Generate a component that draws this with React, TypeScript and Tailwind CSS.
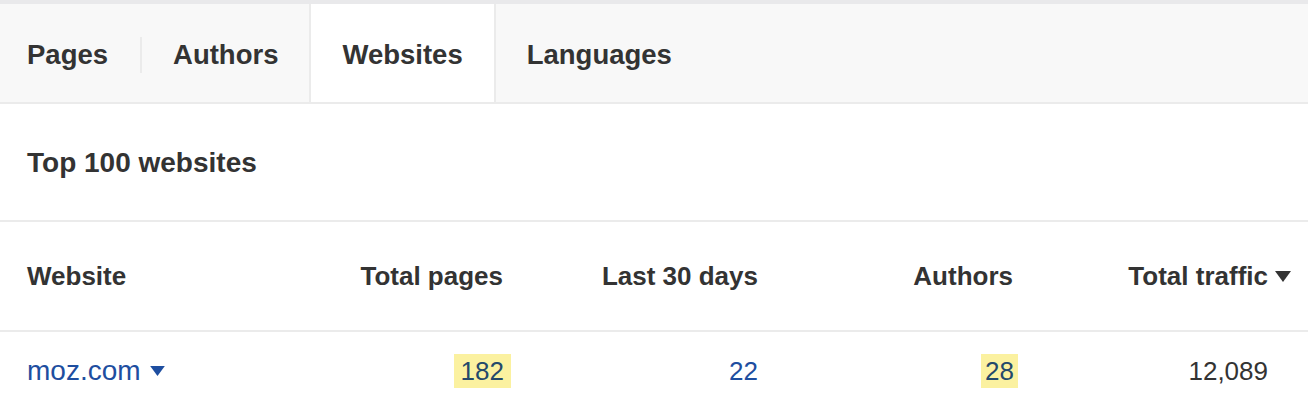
import React from 'react';

const tabs = ['Pages', 'Authors', 'Websites', 'Languages'];

const Caret: React.FC<{ className?: string }> = ({ className }) => (
  <svg viewBox="0 0 16 12" className={className} fill="currentColor">
    <path d="M0 0H16L8 11Z" />
  </svg>
);

const App: React.FC = () => {
  const active = 'Websites';

  return (
    <div className="w-[1308px] h-[404px] overflow-hidden bg-white border-t-4 border-[#e9e9eb] text-[#333] font-['Liberation_Sans',Arial,sans-serif]">
      {/* tabs */}
      <div className="flex h-[100px] bg-[#f8f8f8] border-b-2 border-[#ebebeb]">
        {tabs.map((tab, i) => {
          const isActive = tab === active;
          return (
            <div key={tab} className="flex items-stretch">
              <div
                className={`flex items-center pt-[4px] text-[27.5px] font-bold ${
                  i === 0 ? 'pl-[27px] pr-[32px]' : 'px-[31px]'
                } ${isActive ? 'bg-white border-x-2 border-[#ebebeb]' : ''}`}
              >
                {tab}
              </div>
              {i === 0 && <div className="w-[2px] self-center mt-[4px] h-[36px] bg-[#ebebeb]" />}
            </div>
          );
        })}
      </div>

      {/* title */}
      <div className="h-[118px] flex items-center pl-[27px] pt-[2px] border-b-2 border-[#ebebeb]">
        <h2 className="text-[28px] font-bold">Top 100 websites</h2>
      </div>

      {/* table header */}
      <div className="grid grid-cols-[221px_255px_255px_255px_255px] pl-[27px] h-[110px] pt-[1px] items-center border-b-2 border-[#ebebeb] text-[26px] font-bold">
        <div>Website</div>
        <div className="text-right">Total pages</div>
        <div className="text-right">Last 30 days</div>
        <div className="text-right">Authors</div>
        <div className="flex justify-end">
          <span className="relative">
            Total traffic
            <Caret className="absolute left-full top-1/2 -translate-y-1/2 ml-[7px] w-[16px] h-[12px]" />
          </span>
        </div>
      </div>

      {/* data row */}
      <div className="grid grid-cols-[221px_255px_255px_255px_255px] pl-[27px] h-[78px] items-center text-[26px]">
        <div className="flex items-center text-[#1e4ea0]">
          <span className="text-[28px]">moz.com</span>
          <Caret className="ml-[9px] w-[15px] h-[11px]" />
        </div>
        <div className="flex justify-end">
          <span className="bg-[#fbf1a0] text-[#24496b] px-[7px] -mr-[8px] leading-[34px]">182</span>
        </div>
        <div className="text-right text-[#1e4ea0]">22</div>
        <div className="flex justify-end">
          <span className="bg-[#fbf1a0] text-[#24496b] px-[4px] -mr-[5px] leading-[34px]">28</span>
        </div>
        <div className="text-right">12,089</div>
      </div>
    </div>
  );
};

export default App;
